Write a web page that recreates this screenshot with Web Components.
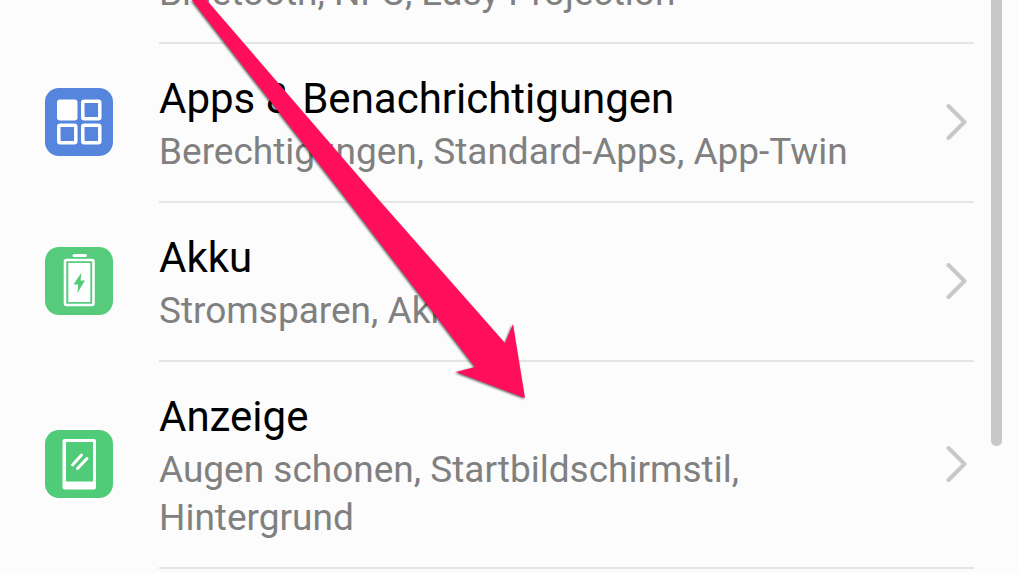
<!DOCTYPE html>
<html lang="de">
<head>
<meta charset="utf-8">
<meta name="viewport" content="width=device-width, initial-scale=1">
<title>Einstellungen</title>
<style>
  html {
    height: 100%;
    overflow: hidden;
  }

  body {
    margin: 0;
    height: 100%;
    overflow: hidden;
    background-color: #fcfcfc;
    font-family: Roboto, "Liberation Sans", sans-serif;
  }
</style>
</head>
<body>
<settings-screen>
  <settings-item>
    <span slot="title">Geräteverbindung</span>
    <span slot="summary">Bluetooth, NFC, Easy Projection</span>
  </settings-item>
  <settings-item>
    <settings-icon slot="icon" name="apps"></settings-icon>
    <span slot="title">Apps &amp; Benachrichtigungen</span>
    <span slot="summary">Berechtigungen, Standard-Apps, App-Twin</span>
  </settings-item>
  <settings-item>
    <settings-icon slot="icon" name="battery"></settings-icon>
    <span slot="title">Akku</span>
    <span slot="summary">Stromsparen, Akku</span>
  </settings-item>
  <settings-item>
    <settings-icon slot="icon" name="display"></settings-icon>
    <span slot="title">Anzeige</span>
    <span slot="summary">Augen schonen, Startbildschirmstil, Hintergrund</span>
  </settings-item>
  <pointer-arrow slot="overlay"></pointer-arrow>
</settings-screen>

<script>
const screenTemplate = document.createElement("template");
screenTemplate.innerHTML = `
<style>
  :host {
    display: flex;
    position: relative;
    height: 100%;
    overflow: hidden;
  }

  /* the list is scrolled, the first row is mostly out of view */
  .list {
    flex: 1;
    min-width: 0;
    margin-top: -115px;
  }

  .track {
    width: 11px;
    margin: 0 16px 0 17px;
  }

  .thumb {
    height: 446px;
    border-radius: 0 0 6px 6px;
    background-color: #c8c8c8;
  }
</style>
<main class="list"><slot></slot></main>
<div class="track"><div class="thumb"></div></div>
<slot name="overlay"></slot>
`;

class SettingsScreen extends HTMLElement {
  constructor() {
    super();
    this.attachShadow({ mode: "open" });
    this.shadowRoot.appendChild(screenTemplate.content.cloneNode(true));
  }
}

customElements.define("settings-screen", SettingsScreen);

const itemTemplate = document.createElement("template");
itemTemplate.innerHTML = `
<style>
  :host {
    display: block;
  }

  .item {
    display: grid;
    grid-template-columns: 68px 1fr;
    column-gap: 46px;
    padding-left: 45px;
    color: #000;
    text-decoration: none;
  }

  .icon {
    display: flex;
    align-items: center;
    padding-bottom: 4px;
  }

  .body {
    display: flex;
    align-items: center;
    gap: 24px;
    border-bottom: 2px solid #e5e5e5;
    padding-right: 6px;
  }

  .text {
    flex: 1;
    min-width: 0;
    padding: 26px 0 25px;
  }

  .title {
    font-size: 42px;
    line-height: 58px;
  }

  .summary {
    color: #808080;
    font-size: 37px;
    line-height: 48px;
  }

  .chevron {
    flex: none;
    display: block;
    padding-bottom: 2px;
  }
</style>
<a class="item" href="#">
  <div class="icon"><slot name="icon"></slot></div>
  <div class="body">
    <div class="text">
      <div class="title"><slot name="title"></slot></div>
      <div class="summary"><slot name="summary"></slot></div>
    </div>
    <svg class="chevron" width="22" height="38" viewBox="0 0 22 38" aria-hidden="true">
      <path d="M2.500 3 18.500 19 2.500 35" fill="none" stroke="#c8c8c8" stroke-width="4" stroke-linecap="round" stroke-linejoin="round"/>
    </svg>
  </div>
</a>
`;

class SettingsItem extends HTMLElement {
  constructor() {
    super();
    this.attachShadow({ mode: "open" });
    this.shadowRoot.appendChild(itemTemplate.content.cloneNode(true));
  }
}

customElements.define("settings-item", SettingsItem);

const icons = {
  apps: `
    <rect width="68" height="68" rx="14" fill="#5585dc"/>
    <rect x="12" y="11.500" width="20.500" height="21" rx="3" fill="#fff"/>
    <g fill="none" stroke="#fff" stroke-width="3.500">
      <rect x="37.800" y="13.200" width="17" height="17.500" rx="1.500"/>
      <rect x="13.800" y="37.200" width="17" height="17.500" rx="1.500"/>
      <rect x="37.800" y="37.200" width="17" height="17.500" rx="1.500"/>
    </g>`,
  battery: `
    <rect width="68" height="68" rx="14" fill="#55cb7b"/>
    <rect x="27.500" y="7" width="14.500" height="3" rx="1.500" fill="#fff"/>
    <rect x="20" y="13" width="28.500" height="45" rx="1.500" fill="none" stroke="#fff" stroke-width="2.600"/>
    <rect x="23.300" y="16" width="22" height="39" fill="#fff"/>
    <path d="M36.500 25.500 28.500 37.500H33.200L32.400 46 40 33.500H35.500Z" fill="#55cb7b"/>`,
  display: `
    <rect width="68" height="68" rx="14" fill="#50cb78"/>
    <path fill-rule="evenodd" d="M19.500 9H49q2 0 2 2V57.500q0 2-2 2H19.500q-2 0-2-2V11q0-2 2-2ZM21 12V51.500H48V12Z" fill="#fff"/>
    <path d="M27.500 35 36.500 25M32.500 38.500 42 28.500" stroke="#fff" stroke-width="3" stroke-linecap="round"/>`,
};

class SettingsIcon extends HTMLElement {
  constructor() {
    super();
    this.attachShadow({ mode: "open" });
  }

  connectedCallback() {
    this.shadowRoot.innerHTML = `
      <style>
        :host {
          display: block;
        }

        svg {
          display: block;
        }
      </style>
      <svg width="68" height="68" viewBox="0 0 68 68" aria-hidden="true">${icons[this.getAttribute("name")]}</svg>
    `;
  }
}

customElements.define("settings-icon", SettingsIcon);

const arrowTemplate = document.createElement("template");
arrowTemplate.innerHTML = `
<style>
  /* annotation drawn over the list */
  :host {
    position: absolute;
    top: 0;
    left: 0;
    pointer-events: none;
  }

  svg {
    display: block;
    filter: drop-shadow(-1px 1px 1px rgba(0, 0, 0, 0.6));
  }
</style>
<svg width="540" height="410" viewBox="0 0 540 410" aria-hidden="true">
  <path d="M184-10 347 200 475 367 456 372 525 398 513 324 505 343 379 200 198-10Z" fill="#ff0f5b"/>
</svg>
`;

class PointerArrow extends HTMLElement {
  constructor() {
    super();
    this.attachShadow({ mode: "open" });
    this.shadowRoot.appendChild(arrowTemplate.content.cloneNode(true));
  }
}

customElements.define("pointer-arrow", PointerArrow);
</script>
</body>
</html>
